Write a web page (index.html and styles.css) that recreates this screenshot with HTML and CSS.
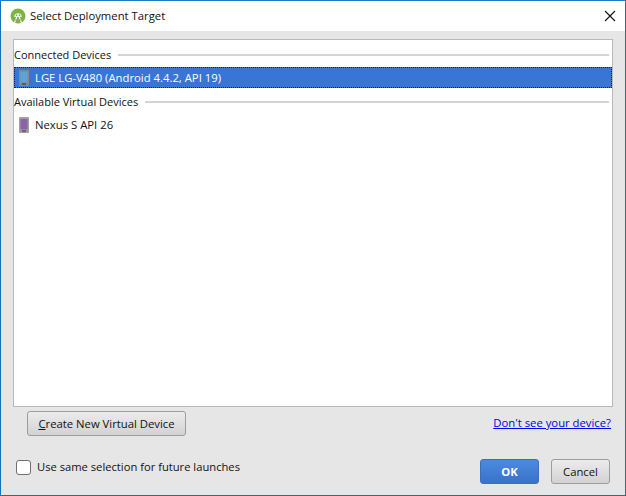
FILE: index.html
```html
<!DOCTYPE html>
<html lang="en">
<head>
<meta charset="utf-8">
<title>Select Deployment Target</title>
<link rel="stylesheet" href="styles.css">
</head>
<body>
<div class="window">
  <header class="titlebar">
    <svg class="app-icon" width="16" height="16" viewBox="0 0 16 16">
      <circle cx="8" cy="8" r="7.5" fill="#7cb342"/>
      <path d="M4.200 9a3.800 3.800 0 0 1 7.600 0z" fill="#e8f3d8"/>
      <circle cx="6.500" cy="7.200" r=".6" fill="#55822b"/>
      <circle cx="9.500" cy="7.200" r=".6" fill="#55822b"/>
      <path d="M6.800 9 4.200 15.500M9.200 9 11.800 15.500" stroke="#f2f2f2" stroke-width="1.300" fill="none"/>
      <path d="M5 12h6" stroke="#9a9a9a" stroke-width="1"/>
    </svg>
    <span class="title">Select Deployment Target</span>
    <svg class="close" width="12" height="12" viewBox="0 0 12 12">
      <path d="M1 1 11 11M11 1 1 11" stroke="#111" stroke-width="1.100" fill="none"/>
    </svg>
  </header>
  <main class="content">
    <section class="list">
      <div class="group"><span class="group-label">Connected Devices</span><i class="rule"></i></div>
      <div class="row selected">
        <svg class="device" width="10" height="16" viewBox="0 0 10 16">
          <rect x="0" y="0" width="10" height="16" rx="1" fill="#7f8a92"/>
          <rect x="1.500" y="2" width="7" height="10.500" fill="#5aa5d6"/>
          <rect x="3" y="13.500" width="4" height="1" fill="#2c3338"/>
        </svg>
        <span>LGE LG-V480 (Android 4.4.2, API 19)</span>
      </div>
      <div class="group"><span class="group-label">Available Virtual Devices</span><i class="rule"></i></div>
      <div class="row">
        <svg class="device" width="10" height="16" viewBox="0 0 10 16">
          <rect x="0" y="0" width="10" height="16" rx="1" fill="#a0a0a0"/>
          <rect x="1.500" y="2" width="7" height="10.500" fill="#8e62a8"/>
          <rect x="3" y="13.500" width="4" height="1" fill="#333"/>
        </svg>
        <span>Nexus S API 26</span>
      </div>
    </section>
    <div class="actions">
      <button class="btn create" type="button"><u>C</u>reate New Virtual Device</button>
      <a class="help" href="#">Don't see your device?</a>
    </div>
    <footer class="footer">
      <label class="check"><i class="box"></i><span class="check-label">Use same selection for future launches</span></label>
      <div class="dialog-buttons">
        <button class="btn primary" type="button">OK</button>
        <button class="btn" type="button">Cancel</button>
      </div>
    </footer>
  </main>
</div>
</body>
</html>
```
FILE: styles.css
```css
* { box-sizing: border-box; }
html, body { margin: 0; padding: 0; }
body {
  width: 626px;
  height: 496px;
  overflow: hidden;
  font-family: "Open Sans", "Liberation Sans", sans-serif;
  font-size: 11.3px;
  color: #111;
}
.window {
  width: 626px;
  height: 496px;
  display: flex;
  flex-direction: column;
  border: 1px solid #1272b8;
  border-top-color: #1b7cc4;
  background: #e6e6e6;
}
.titlebar {
  height: 30px;
  flex: none;
  background: #fff;
  display: flex;
  align-items: center;
  padding: 0 9px 0 9px;
  gap: 4px;
}
.title { flex: 1; color: #111; padding-bottom: 1px; }
.app-icon { margin-bottom: 1px; }
.content {
  flex: 1;
  display: flex;
  flex-direction: column;
  padding: 8px 12px 0 12px;
}
.list {
  height: 368px;
  flex: none;
  background: #fff;
  border: 1px solid #b9b9b9;
  padding-top: 5px;
}
.group {
  height: 22px;
  display: flex;
  align-items: center;
  gap: 7px;
  padding-right: 3px;
  padding-bottom: 2px;
  font-size: 11px;
}
.group-label { padding-bottom: 2px; }
.rule { flex: 1; height: 2px; background: #d4d4d4; }
.row {
  height: 21px;
  display: flex;
  align-items: center;
  gap: 6px;
  padding-left: 5px;
}
.row.selected {
  background: #3875d7;
  color: #fff;
  outline: 1px dotted #10204a;
  outline-offset: -1px;
}
.row + .group { margin-top: 4px; }
.device { flex: none; }
.actions {
  display: flex;
  align-items: flex-start;
  justify-content: space-between;
  padding: 4px 2px 0 14px;
}
.btn {
  height: 25px;
  padding: 0;
  width: 59px;
  font: inherit;
  color: #111;
  background: linear-gradient(#ececec, #d2d2d2);
  border: 1px solid #9d9d9d;
  border-radius: 3px;
}
.btn.create { width: 159px; }
.help { color: #0000ee; text-decoration: underline; margin-top: 4px; }
.footer {
  display: flex;
  align-items: flex-start;
  justify-content: space-between;
  padding: 23px 3px 0 3px;
}
.check {
  display: flex;
  align-items: center;
  gap: 6px;
  height: 15px;
  margin-top: 1px;
  font-size: 11.2px;
}
.check-label { padding-bottom: 2px; }
.box {
  width: 15px;
  height: 15px;
  background: #fff;
  border: 1px solid #6f6f6f;
  border-radius: 3px;
}
.dialog-buttons { display: flex; gap: 12px; }
.btn.primary {
  color: #fff;
  font-weight: 700;
  background: linear-gradient(#4a8be0, #3a72c8);
  border-color: #3d6fb8;
}
```
